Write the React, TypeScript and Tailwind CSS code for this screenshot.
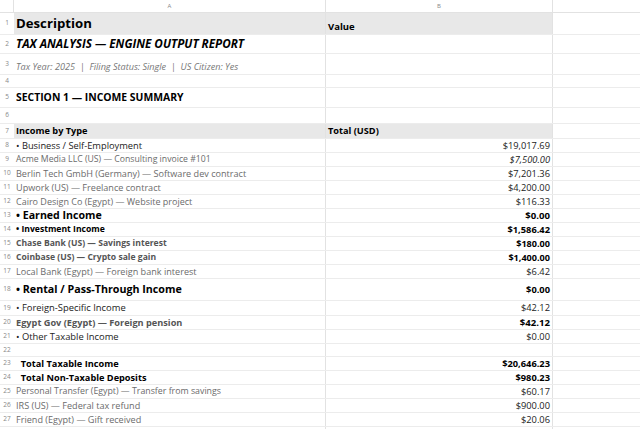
import React from "react";

type R = { n: number; h: number; a?: string; b?: string; ac?: string; bc?: string; bg?: boolean };
const g = "text-[#6b6b6b]";
const rows: R[] = [
  { n: 1, h: 22, a: "Description", b: "Value", ac: "text-[13.2px] font-bold text-black", bc: "text-[9.5px] font-bold text-black self-end pb-[3px]", bg: true },
  { n: 2, h: 19, a: "TAX ANALYSIS — ENGINE OUTPUT REPORT", ac: "text-[11.7px] font-bold italic text-black" },
  { n: 3, h: 21, a: "Tax Year: 2025  |  Filing Status: Single  |  US Citizen: Yes", ac: "text-[9.1px] italic text-[#777] whitespace-pre self-end pb-[3px]" },
  { n: 4, h: 13 },
  { n: 5, h: 20, a: "SECTION 1 — INCOME SUMMARY", ac: "text-[10.4px] font-bold text-black" },
  { n: 6, h: 16 },
  { n: 7, h: 15, a: "Income by Type", b: "Total (USD)", ac: "text-[9.2px] font-bold text-black", bc: "text-[9.2px] font-bold text-black", bg: true },
  { n: 8, h: 14, a: "• Business / Self-Employment", b: "$19,017.69", ac: "text-[9.3px] text-[#222]", bc: "text-[9.3px] text-[#222]" },
  { n: 9, h: 14, a: "Acme Media LLC (US) — Consulting invoice #101", b: "$7,500.00", ac: `text-[8.7px] ${g}`, bc: "text-[9.3px] italic text-[#222]" },
  { n: 10, h: 14, a: "Berlin Tech GmbH (Germany) — Software dev contract", b: "$7,201.36", ac: `text-[9.1px] ${g}`, bc: "text-[9.3px] text-[#222]" },
  { n: 11, h: 14, a: "Upwork (US) — Freelance contract", b: "$4,200.00", ac: `text-[9.1px] ${g}`, bc: "text-[9.3px] text-[#222]" },
  { n: 12, h: 14, a: "Cairo Design Co (Egypt) — Website project", b: "$116.33", ac: `text-[9px] ${g}`, bc: "text-[9.3px] text-[#222]" },
  { n: 13, h: 14, a: "• Earned Income", b: "$0.00", ac: "text-[10.6px] font-bold text-black", bc: "text-[9.6px] font-bold text-black" },
  { n: 14, h: 14, a: "• Investment Income", b: "$1,586.42", ac: "text-[8.6px] font-bold text-black", bc: "text-[9.3px] font-bold text-black" },
  { n: 15, h: 14, a: "Chase Bank (US) — Savings interest", b: "$180.00", ac: "text-[8.6px] font-bold text-[#555]", bc: "text-[9.1px] font-bold text-black" },
  { n: 16, h: 14, a: "Coinbase (US) — Crypto sale gain", b: "$1,400.00", ac: "text-[8.6px] font-bold text-[#555]", bc: "text-[9.1px] font-bold text-black" },
  { n: 17, h: 14, a: "Local Bank (Egypt) — Foreign bank interest", b: "$6.42", ac: `text-[9.1px] ${g}`, bc: "text-[9.3px] text-[#222]" },
  { n: 18, h: 22, a: "• Rental / Pass-Through Income", b: "$0.00", ac: "text-[10.7px] font-bold text-black", bc: "text-[9.3px] font-bold text-black" },
  { n: 19, h: 15, a: "• Foreign-Specific Income", b: "$42.12", ac: "text-[9.4px] text-[#222]", bc: "text-[9.3px] text-[#222]" },
  { n: 20, h: 14, a: "Egypt Gov (Egypt) — Foreign pension", b: "$42.12", ac: "text-[9.2px] font-bold text-[#555]", bc: "text-[9.6px] font-bold text-black" },
  { n: 21, h: 14, a: "• Other Taxable Income", b: "$0.00", ac: "text-[9.4px] text-[#222]", bc: "text-[9.3px] text-[#222]" },
  { n: 22, h: 13 },
  { n: 23, h: 14, a: "  Total Taxable Income", b: "$20,646.23", ac: "text-[9.2px] font-bold text-black whitespace-pre", bc: "text-[9.3px] font-bold text-black" },
  { n: 24, h: 14, a: "  Total Non-Taxable Deposits", b: "$980.23", ac: "text-[9.2px] font-bold text-black whitespace-pre", bc: "text-[9.3px] font-bold text-black" },
  { n: 25, h: 14, a: "Personal Transfer (Egypt) — Transfer from savings", b: "$60.17", ac: `text-[8.8px] ${g}`, bc: "text-[9.3px] text-[#222]" },
  { n: 26, h: 14, a: "IRS (US) — Federal tax refund", b: "$900.00", ac: `text-[9.1px] ${g}`, bc: "text-[9.3px] text-[#222]" },
  { n: 27, h: 14, a: "Friend (Egypt) — Gift received", b: "$20.06", ac: `text-[9.1px] ${g}`, bc: "text-[9.3px] text-[#222]" },
  { n: 28, h: 14 },
];

export default function App() {
  return (
    <div className="w-[640px] h-[429px] overflow-hidden bg-white" style={{ fontFamily: '"Open Sans", sans-serif' }}>
      <div className="grid grid-cols-[14px_312px_227px_1fr] h-[13px] border-b border-[#e2e2e2] text-[6px] text-[#888]">
        <div className="border-r border-[#e2e2e2]" />
        <div className="flex items-center justify-center border-r border-[#e2e2e2]">A</div>
        <div className="flex items-center justify-center border-r border-[#e2e2e2]">B</div>
        <div />
      </div>
      {rows.map((r) => (
        <div key={r.n} className="grid grid-cols-[14px_312px_227px_1fr] border-b border-[#ececec]" style={{ height: r.h }}>
          <div className="text-[6.5px] text-[#888] flex items-center justify-center leading-none">{r.n}</div>
          <div className={`flex items-center px-[2px] border-r border-[#e2e2e2] overflow-hidden whitespace-nowrap leading-none ${r.bg ? "bg-[#e8e8e8]" : ""}`}>
            {r.a && <span className={r.ac}>{r.a}</span>}
          </div>
          <div className={`flex items-center px-[2px] border-r border-[#e2e2e2] leading-none ${r.n === 1 || r.n === 7 ? "justify-start" : "justify-end"} ${r.bg ? "bg-[#e8e8e8]" : ""}`}>
            {r.b && <span className={r.bc}>{r.b}</span>}
          </div>
          <div />
        </div>
      ))}
    </div>
  );
}
